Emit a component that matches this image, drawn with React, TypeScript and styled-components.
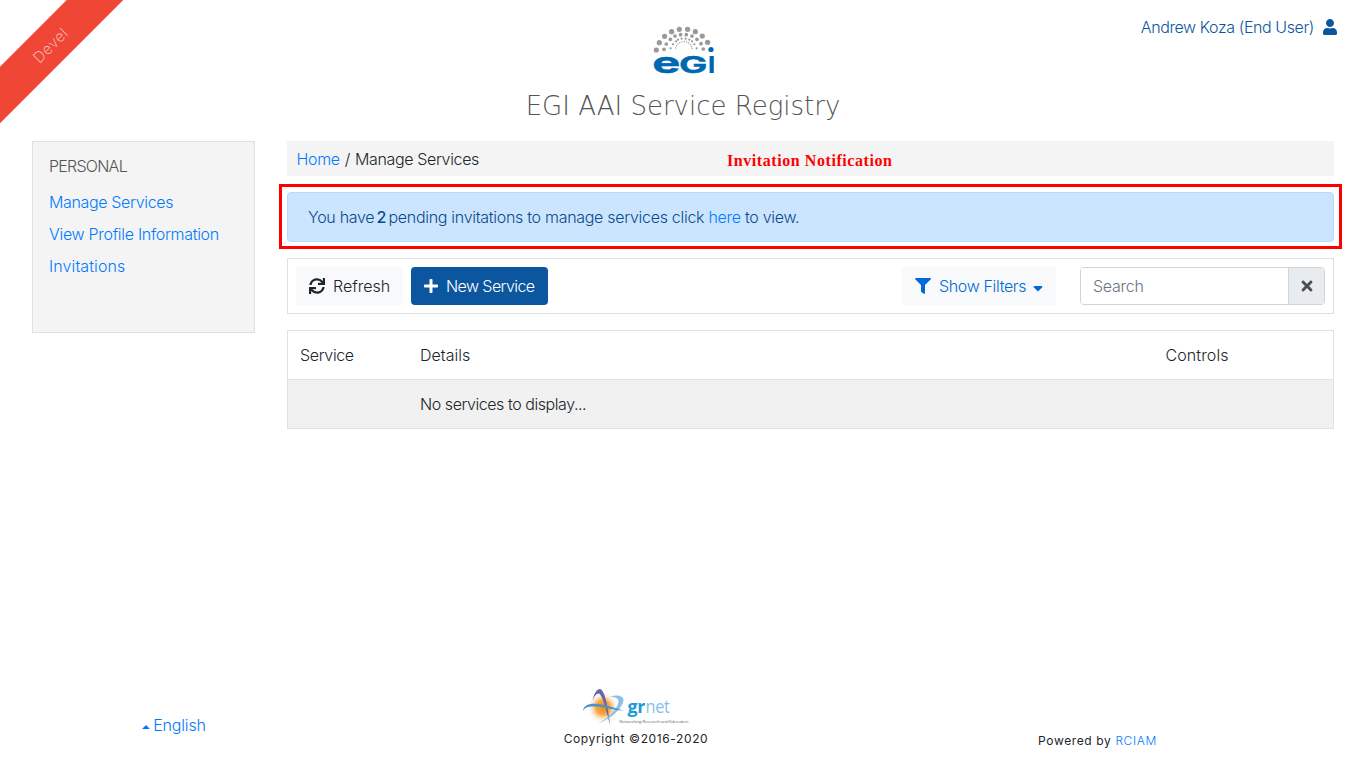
import React from "react";
import styled, { createGlobalStyle } from "styled-components";
import { FaFilter, FaPlus, FaSortDown, FaSync, FaTimes, FaUser } from "react-icons/fa";

const GlobalStyle = createGlobalStyle`
  *, *::before, *::after { box-sizing: border-box; }
  body {
    margin: 0;
    background: #fff;
    color: #212529;
    font-family: Inter, "Liberation Sans", sans-serif;
    font-size: 16px;
    font-weight: 300;
    line-height: 24px;
    letter-spacing: -0.35px;
  }
`;

const Page = styled.div`
  position: relative;
  min-height: 767px;
  display: flex;
  flex-direction: column;
  overflow: hidden;
`;

const Ribbon = styled.div`
  position: absolute;
  top: 28px;
  left: -53px;
  width: 200px;
  height: 40px;
  line-height: 41px;
  padding-left: 9px;
  background: #ef4636;
  color: #f8d3cf;
  text-align: center;
  font-size: 15px;
  font-weight: 200;
  letter-spacing: 0.6px;
  transform: rotate(-45deg);
`;

const Header = styled.header`
  height: 141px;
  padding: 26px 29px 0 32px;
  display: grid;
  grid-template-columns: 1fr 340px 1fr;
`;

const Brand = styled.div`
  grid-column: 2;
  display: flex;
  flex-direction: column;
  align-items: center;
  margin-left: -3px;

  svg { overflow: visible; margin-left: 3px; }
`;

const Title = styled.h1`
  margin: 14px 0 0;
  font-family: "DejaVu Sans Light", "DejaVu Sans", sans-serif;
  font-size: 26px;
  font-weight: 200;
  line-height: 36px;
  letter-spacing: 0;
  white-space: nowrap;
  color: #555;
`;

const Account = styled.div`
  justify-self: end;
  align-self: start;
  display: flex;
  align-items: center;
  gap: 9px;
  margin-top: -11px;
  color: #0b569f;
  letter-spacing: -0.4px;

  svg { width: 14px; }
`;

const Body = styled.div`
  display: flex;
  align-items: flex-start;
  gap: 32px;
  padding: 0 32px;
`;

const Sidebar = styled.nav`
  width: 223px;
  height: 192px;
  padding: 12px 16px;
  border: 1px solid #dfe0e1;
  background: #f4f4f4;
`;

const SidebarTitle = styled.div`
  margin-bottom: 8px;
  color: #555;
  letter-spacing: -0.75px;
`;

const Link = styled.a`
  color: #007bff;
  text-decoration: none;
`;

const SidebarLink = styled(Link)<{ $tracking?: number }>`
  display: block;
  padding: 4px 0;
  white-space: nowrap;
  letter-spacing: ${(p) => p.$tracking ?? -0.35}px;
`;

const Main = styled.main`
  flex: 1;
  min-width: 0;
`;

const Breadcrumb = styled.div`
  position: relative;
  height: 35px;
  padding: 6px 9.5px;
  display: flex;
  gap: 5px;
  background: #f4f4f4;
`;

const Annotation = styled.span`
  position: absolute;
  left: 440px;
  top: 8px;
  font: bold 16px/24px "Liberation Serif", serif;
  letter-spacing: 0.57px;
  white-space: nowrap;
  color: #f00;
`;

const Alert = styled.div`
  position: relative;
  height: 50px;
  margin-top: 16px;
  padding: 12px 20px;
  border: 1px solid #b8daff;
  border-radius: 4px;
  background: #cce5ff;
  color: #0b4a8b;
  letter-spacing: -0.29px;

  &::after {
    content: "";
    position: absolute;
    inset: -9px -9px -8px;
    border: 3px solid #f00;
  }
`;

const Strong = styled.b`
  margin: 0 -1px 0 -2px;
  font-weight: 500;
  letter-spacing: -1.2px;
`;

const Toolbar = styled.div`
  height: 56px;
  margin-top: 16px;
  padding: 8px;
  display: flex;
  border: 1px solid #dfe0e1;
`;

const Button = styled.button<{ $bg: string; $fg: string; $width: number; $tracking: number }>`
  width: ${(p) => p.$width}px;
  height: 38px;
  margin-right: 8px;
  padding: 0 0 0 13px;
  display: flex;
  align-items: center;
  border: 0;
  border-radius: 4px;
  background: ${(p) => p.$bg};
  color: ${(p) => p.$fg};
  font: inherit;
  letter-spacing: ${(p) => p.$tracking}px;
  white-space: nowrap;

  svg { flex-shrink: 0; }
  svg:first-child { margin-right: 8px; }
`;

const PlusIcon = styled(FaPlus)`
  width: 14px;
`;

const CaretDown = styled(FaSortDown)`
  width: 10px;
  margin: -2px 0 0 7px;
`;

const Spacer = styled.div`
  flex: 1;
`;

const SearchGroup = styled.div`
  width: 245px;
  height: 38px;
  margin-left: 16px;
  display: flex;
  border: 1px solid #ced4da;
  border-radius: 4px;
  overflow: hidden;
`;

const SearchInput = styled.input`
  flex: 1;
  min-width: 0;
  padding: 0 12px;
  border: 0;
  font: inherit;
  letter-spacing: -0.25px;
  &::placeholder { color: #6c757d; }
`;

const ClearButton = styled.div`
  width: 36px;
  display: grid;
  place-items: center;
  border-left: 1px solid #ced4da;
  background: #e9ecef;
  color: #495057;
`;

const Table = styled.div`
  margin-top: 16px;
  border: 1px solid #dee2e6;
`;

const Row = styled.div<{ $striped?: boolean }>`
  display: grid;
  grid-template-columns: 120px 745.5px 1fr;
  height: ${(p) => (p.$striped ? 49 : 48)}px;
  align-items: center;
  border-top: ${(p) => (p.$striped ? "1px solid #dee2e6" : "0")};
  background: ${(p) => (p.$striped ? "#f1f1f1" : "#fff")};
`;

const Cell = styled.div<{ $tracking?: number }>`
  padding-left: 12px;
  letter-spacing: ${(p) => p.$tracking ?? -0.35}px;
`;

const Footer = styled.footer`
  margin-top: auto;
  height: 79px;
  padding: 0 95px 0 0;
  display: grid;
  grid-template-columns: 348px 576px 1fr;
  justify-items: center;
`;

const Language = styled(Link)`
  display: flex;
  align-items: center;
  gap: 3px;
  height: 24px;
  margin-top: 25px;
  letter-spacing: -0.15px;
`;

const CaretUp = styled.span`
  margin-top: 4px;
  border: 4px solid transparent;
  border-top: 0;
  border-bottom-color: #007bff;
`;

const Small = styled.div<{ $top: number }>`
  margin-top: ${(p) => p.$top}px;
  font-size: 12px;
  line-height: 20px;
  letter-spacing: 0.62px;
  font-weight: 400;
  white-space: nowrap;

  a { font-weight: 300; }
`;

const Copyright = styled.div`
  display: flex;
  flex-direction: column;
  align-items: center;
`;

const LogoSlot = styled.div`
  height: 38px;
  display: flex;
`;

const outerDots = [[3, 24], [6, 16.7], [11.3, 10.3], [18.3, 5.7], [26, 3.3], [34.3, 3.3], [42, 5.7], [49, 10], [54.3, 16.3]];
const middleDots = [[10.7, 23.3], [13, 18], [17, 13.3], [21.7, 10], [27.3, 8.7], [33, 8.7], [38.7, 10], [43.7, 13.3], [47.7, 17.7], [50, 23]];
const innerDots = [[17.3, 22.3], [19.7, 18.3], [22.7, 15.3], [24.7, 13.7], [28.3, 12.7], [32.3, 12.7], [36, 13.7], [38.7, 15.3], [41, 18.3], [43.3, 22.3]];
const coreDots = [[22.3, 22], [23.3, 20], [24.7, 18], [26.5, 16.7], [28.7, 15.8], [31, 15.5], [33.3, 16], [35.3, 17], [37, 18.6], [38.2, 20.5], [39, 22.3]];

const rings: [number[][], number][] = [[outerDots, 2.6], [middleDots, 1.85], [innerDots, 1.1], [coreDots, 0.65]];

function EgiLogo() {
  return (
    <svg width="62" height="48" viewBox="0.7 0 62 48" aria-label="EGI">
      {rings.map(([dots, r]) =>
        dots.map(([x, y]) => <circle key={`${x}-${y}`} cx={x} cy={y} r={r} fill="#999" />)
      )}
      <circle cx="57.7" cy="23.5" r="2.6" fill="#0067b1" />
      <g fill="#0067b1" stroke="#0067b1" strokeWidth="0.4" fontFamily="Inter" fontWeight="700" letterSpacing="0">
        <text transform="translate(-1 46.6) scale(1.6 1)" fontSize="29.5">e</text>
        <text transform="translate(25.6 46.6) scale(1.68 1)" fontSize="22.5">G</text>
      </g>
      <rect x="56.3" y="30" width="4.200" height="17" fill="#0067b1" />
    </svg>
  );
}

function GrnetLogo() {
  return (
    <svg width="106" height="38" viewBox="0 0 106 38" aria-label="grnet">
      <defs>
        <radialGradient id="glow">
          <stop offset="0" stopColor="#f58a0a" />
          <stop offset="0.45" stopColor="#f9a94a" />
          <stop offset="1" stopColor="#fff" stopOpacity="0" />
        </radialGradient>
      </defs>
      <ellipse cx="20" cy="19.5" rx="16" ry="16" fill="url(#glow)" />
      <path d="M9.5 13C11 5 14 1 17 1C21.500 2 24.500 15 27.300 38C23 22 20 8 16 5.500C13 5.500 11 9 9.500 13Z" fill="#6467ab" />
      <path d="M27 8.500C35 6.500 40.500 8 40.500 12C40 20 29 30 14.500 36C27 29 35 20 35.500 13.500C36 10.500 32 9 27 8.500Z" fill="#8bc0e8" />
      <path d="M0 23.500C0 18 5 15.500 12 15.800C21 16 30 19.500 40 22.500C31 22.500 23 19 13 18.500C5 18 1 19.500 0 23.500Z" fill="#4b94cb" />
      <g fontFamily="Open Sans, sans-serif" fontSize="18">
        <text x="44.500" y="24.500" fontWeight="700" fill="#1d9ad7" textLength="17.500" lengthAdjust="spacingAndGlyphs">gr</text>
        <text x="62.500" y="24.500" fontWeight="500" fill="#85bfe8" textLength="24" lengthAdjust="spacingAndGlyphs">net</text>
      </g>
      <text x="36" y="35.300" fontFamily="Open Sans, sans-serif" fontSize="4.300" fontWeight="400" fill="#777" textLength="69" lengthAdjust="spacingAndGlyphs">
        Networking Research and Education
      </text>
    </svg>
  );
}

export default function App() {
  return (
    <Page>
      <GlobalStyle />
      <Header>
        <Brand>
          <EgiLogo />
          <Title>EGI AAI Service Registry</Title>
        </Brand>
        <Account>
          <span>Andrew Koza (End User)</span>
          <FaUser />
        </Account>
      </Header>
      <Ribbon>Devel</Ribbon>
      <Body>
        <Sidebar>
          <SidebarTitle>PERSONAL</SidebarTitle>
          <SidebarLink>Manage Services</SidebarLink>
          <SidebarLink $tracking={-0.3}>View Profile Information</SidebarLink>
          <SidebarLink $tracking={0.1}>Invitations</SidebarLink>
        </Sidebar>
        <Main>
          <Breadcrumb>
            <Link>Home</Link>
            <span>/</span>
            <span>Manage Services</span>
            <Annotation>Invitation Notification</Annotation>
          </Breadcrumb>
          <Alert>
            You have <Strong>2</Strong> pending invitations to manage services click <Link>here</Link> to view.
          </Alert>
          <Toolbar>
            <Button $bg="#f8f9fa" $fg="#212529" $width={107} $tracking={0}>
              <FaSync />
              Refresh
            </Button>
            <Button $bg="#0b569f" $fg="#fff" $width={137} $tracking={-0.58}>
              <PlusIcon />
              New Service
            </Button>
            <Spacer />
            <Button $bg="#f8f9fa" $fg="#0069d9" $width={154} $tracking={-0.35}>
              <FaFilter />
              Show Filters
              <CaretDown />
            </Button>
            <SearchGroup>
              <SearchInput placeholder="Search" />
              <ClearButton>
                <FaTimes />
              </ClearButton>
            </SearchGroup>
          </Toolbar>
          <Table>
            <Row>
              <Cell>Service</Cell>
              <Cell $tracking={0}>Details</Cell>
              <Cell $tracking={0.1}>Controls</Cell>
            </Row>
            <Row $striped>
              <Cell />
              <Cell $tracking={-0.44}>No services to display...</Cell>
              <Cell />
            </Row>
          </Table>
        </Main>
      </Body>
      <Footer>
        <Language>
          <CaretUp />
          English
        </Language>
        <Copyright>
          <LogoSlot>
            <GrnetLogo />
          </LogoSlot>
          <Small $top={3}>Copyright ©2016-2020</Small>
        </Copyright>
        <Small $top={43}>
          Powered by <Link>RCIAM</Link>
        </Small>
      </Footer>
    </Page>
  );
}
